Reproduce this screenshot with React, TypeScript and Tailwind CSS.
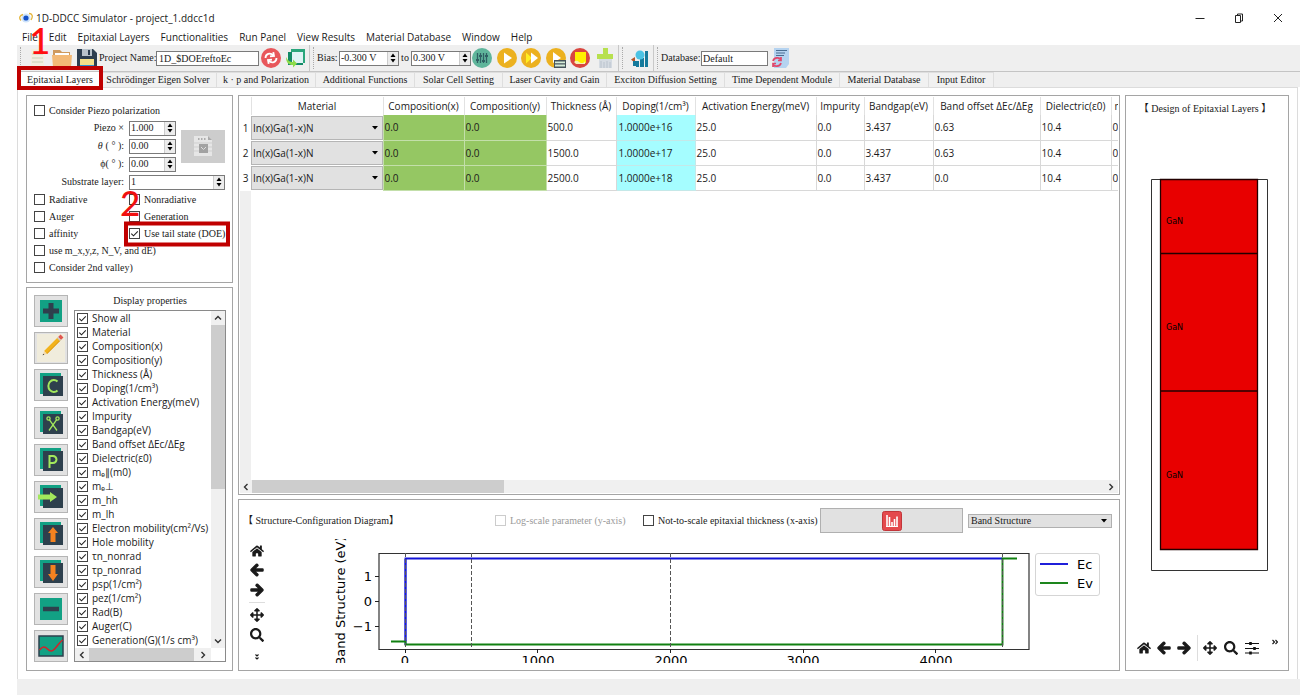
import type { ReactNode } from "react";
import { FaArrowLeft, FaArrowRight, FaArrowsAlt, FaHome, FaSearch } from "react-icons/fa";

const menus = ["File", "Edit", "Epitaxial Layers", "Functionalities", "Run Panel", "View Results", "Material Database", "Window", "Help"];

const tabs = [
  { name: "Schrödinger Eigen Solver", width: "w-[117px]" },
  { name: "k · p and Polarization", width: "w-[99px]" },
  { name: "Additional Functions", width: "w-[99px]" },
  { name: "Solar Cell Setting", width: "w-[88px]" },
  { name: "Laser Cavity and Gain", width: "w-[104px]" },
  { name: "Exciton Diffusion Setting", width: "w-[118px]" },
  { name: "Time Dependent Module", width: "w-[115px]" },
  { name: "Material Database", width: "w-[89px]" },
  { name: "Input Editor", width: "w-[65px]" },
];

const properties = [
  "Show all", "Material", "Composition(x)", "Composition(y)", "Thickness (Å)", "Doping(1/cm³)",
  "Activation Energy(meV)", "Impurity", "Bandgap(eV)", "Band offset ΔEc/ΔEg", "Dielectric(ε0)", "mₑ∥(m0)",
  "mₑ⊥", "m_hh", "m_lh", "Electron mobility(cm²/Vs)", "Hole mobility", "τn_nonrad", "τp_nonrad",
  "psp(1/cm²)", "pez(1/cm²)", "Rad(B)", "Auger(C)", "Generation(G)(1/s cm³)",
];

const columns = [
  { name: "Material", width: "w-[132px]" },
  { name: "Composition(x)", width: "w-[81px]" },
  { name: "Composition(y)", width: "w-[82px]" },
  { name: "Thickness (Å)", width: "w-[70px]" },
  { name: "Doping(1/cm³)", width: "w-[79px]" },
  { name: "Activation Energy(meV)", width: "w-[121px]" },
  { name: "Impurity", width: "w-[48px]" },
  { name: "Bandgap(eV)", width: "w-[69px]" },
  { name: "Band offset ΔEc/ΔEg", width: "w-[107px]" },
  { name: "Dielectric(ε0)", width: "w-[71px]" },
];

const layers = [
  ["0.0", "0.0", "500.0", "1.0000e+16", "25.0", "0.0", "3.437", "0.63", "10.4"],
  ["0.0", "0.0", "1500.0", "1.0000e+17", "25.0", "0.0", "3.437", "0.63", "10.4"],
  ["0.0", "0.0", "2500.0", "1.0000e+18", "25.0", "0.0", "3.437", "0.0", "10.4"],
];

function Check({ label, checked = false, disabled = false, children }: { label: string; checked?: boolean; disabled?: boolean; children?: ReactNode }) {
  return (
    <label className={disabled ? "relative flex items-center gap-1 whitespace-nowrap text-[#9a9a9a]" : "relative flex items-center gap-1 whitespace-nowrap"}>
      <span className="grid shrink-0">
        <input
          type="checkbox"
          defaultChecked={checked}
          disabled={disabled}
          className="peer col-start-1 row-start-1 size-[11px] appearance-none border border-[#444] bg-white disabled:border-[#ccc]"
        />
        <svg viewBox="0 0 11 11" className="pointer-events-none col-start-1 row-start-1 hidden size-[11px] peer-checked:block" fill="none" stroke="#222" strokeWidth="1.1">
          <path d="M2.3 5.6 4.5 7.8 8.8 3.3" />
        </svg>
      </span>
      <span>{label}</span>
      {children}
    </label>
  );
}

function Spin({ id, value, className }: { id: string; value: string; className: string }) {
  return (
    <span className={`flex h-[15px] border border-[#7a7a7a] bg-white ${className}`}>
      <input id={id} defaultValue={value} className="w-0 min-w-0 flex-1 bg-transparent pl-px outline-none" />
      <span className="flex w-[11px] flex-col border-l border-[#ccc] bg-[#ececec]">
        <button aria-label="Increase" className="flex flex-1 items-center justify-center">
          <svg viewBox="0 0 6 4" className="h-1 w-1.5"><path d="M3 .5 5.500 4h-5z" /></svg>
        </button>
        <button aria-label="Decrease" className="flex flex-1 items-center justify-center">
          <svg viewBox="0 0 6 4" className="h-1 w-1.5"><path d="M.5 0h5L3 3.500z" /></svg>
        </button>
      </span>
    </span>
  );
}

function Caret() {
  return (
    <svg viewBox="0 0 6 4" className="pointer-events-none absolute top-1/2 right-1 h-1 w-1.5 -translate-y-1/2">
      <path d="M0 0h6L3 3.500z" />
    </svg>
  );
}

function Chevron({ d }: { d: string }) {
  return (
    <svg viewBox="0 0 8 8" className="size-2" fill="none" stroke="#333" strokeWidth="1.4">
      <path d={d} />
    </svg>
  );
}
const LEFT = "M5.5 1 2.5 4l3 3";
const RIGHT = "M2.5 1l3 3-3 3";
const UP = "M1 5.5l3-3 3 3";
const DOWN = "M1 2.5l3 3 3-3";

function Bracket({ children }: { children: string }) {
  return <span className="font-['Noto_Sans_CJK_TC',sans-serif]">{children}</span>;
}

function Handle() {
  return <span className="h-[22px] w-px shrink-0 border-l border-dotted border-[#aaa]" />;
}

function Divider() {
  return <span className="h-full w-px shrink-0 bg-[#c8c8c8]" />;
}

function Tool({ label, children, className = "" }: { label: string; children: ReactNode; className?: string }) {
  return (
    <button aria-label={label} className={`shrink-0 ${className}`}>
      <svg viewBox="0 0 20 20" className="size-5">{children}</svg>
    </button>
  );
}

function SideButton({ label, children }: { label: string; children: ReactNode }) {
  return (
    <button aria-label={label} className="flex h-8 w-[34px] items-center justify-center border border-[#b5b5b5] bg-[#e2e2e2]">
      <svg viewBox="0 0 28 28" className="size-7">{children}</svg>
    </button>
  );
}

function Stack() {
  return (
    <>
      <path d="M3 2h21v21H3z" fill="#12a184" />
      <path d="M6 5h20v20H6z" fill="#2e404d" />
    </>
  );
}

function SideButtons() {
  return (
    <div className="flex flex-col justify-between">
      <SideButton label="Add layer">
        <path d="M3 3h22v22H3z" fill="#12a184" />
        <path d="M14 6v16M6 14h16" stroke="#2e404d" strokeWidth="5" />
      </SideButton>
      <SideButton label="Edit layer">
        <path d="M0 0h28v28H0z" fill="#f0ecdc" />
        <path d="M8.500 18.500 22 5" stroke="#f2b31c" strokeWidth="4" />
        <path d="M9.800 19.800 23 6.500" stroke="#d99412" strokeWidth="1" />
        <path d="M7.100 17.100 9.900 19.900 6 21z" fill="#f3d9a8" />
        <path d="m6.300 19.800 1 1-1.700.5z" fill="#333" />
        <path d="M22.500 4.500 25 2" stroke="#e0574f" strokeWidth="4" />
        <path d="M21.500 5.500 22.500 4.500" stroke="#c8ccd0" strokeWidth="4" />
      </SideButton>
      <SideButton label="Copy layer">
        <Stack />
        <path d="M20.500 10.500a5.500 6 0 1 0 0 9" fill="none" stroke="#a2e85c" strokeWidth="2" />
      </SideButton>
      <SideButton label="Cut layer">
        <Stack />
        <g fill="none" stroke="#a2e85c" strokeWidth="1.300">
          <path d="M12.300 10.700 20 21.500M19.700 10.700 12 21.500" />
          <circle cx="11.500" cy="9.500" r="1.600" />
          <circle cx="20.500" cy="9.500" r="1.600" />
        </g>
      </SideButton>
      <SideButton label="Paste layer">
        <Stack />
        <path d="M12.500 22V10h3.500a3.400 3.400 0 0 1 0 7h-3.500" fill="none" stroke="#a2e85c" strokeWidth="2" />
      </SideButton>
      <SideButton label="Insert layer">
        <Stack />
        <path d="M1 11.500h12V9l7 5-7 5v-2.500H1z" fill="#a2e85c" />
      </SideButton>
      <SideButton label="Move up">
        <Stack />
        <path d="M13.500 22V13h-2.500l5-6 5 6h-2.500v9z" fill="#f58220" />
      </SideButton>
      <SideButton label="Move down">
        <Stack />
        <path d="M13.500 7v9h-2.500l5 7 5-7h-2.500V7z" fill="#f58220" />
      </SideButton>
      <SideButton label="Remove layer">
        <path d="M3 3h22v22H3z" fill="#12a184" />
        <path d="M6 14h16" stroke="#2e404d" strokeWidth="4.500" />
      </SideButton>
      <SideButton label="Plot layer">
        <path d="M2 4h24v20H2z" fill="#12a184" stroke="#2e404d" strokeWidth="1.500" />
        <path d="M2.500 18c3-3.500 5-4 8-1s5 2.500 8-1 4.500-6 7-8" fill="none" stroke="#d2232a" strokeWidth="1.600" />
      </SideButton>
    </div>
  );
}

function Toolbar() {
  return (
    <div className="flex h-[27px] items-center border-b border-[#c4c4c4] bg-[#efefef] pl-[3px] font-['Liberation_Serif',serif] text-[10px] leading-3">
      <Handle />
      <Tool label="New" className="ml-[6px]">
        <path d="M4 1h13v18H4z" fill="#f3efdf" />
        <path d="M5 6h11M5 10h11M5 14h11" stroke="#c9d3b8" />
      </Tool>
      <Tool label="Open" className="ml-[5px]">
        <path d="M1 2h7l2 2h8v5H1z" fill="#cf9a5e" />
        <path d="M3 5h14v5H3z" fill="#fff" />
        <path d="M0 7h20l-1 12H1z" fill="#f3b976" />
      </Tool>
      <Tool label="Save" className="ml-[5px]">
        <path d="M0 1h16l4 4v14H0z" fill="#2d3e50" />
        <path d="M5 1h10v7H5z" fill="#b9c3cc" />
        <path d="M11 2h2v5h-2z" fill="#2d3e50" />
        <path d="M3 11h14v8H3z" fill="#f4df8a" />
        <path d="M3 17h14v2H3z" fill="#2f8fd0" />
      </Tool>
      <label htmlFor="project" className="ml-[2px] w-[57px] whitespace-nowrap">Project Name:</label>
      <input id="project" defaultValue="1D_$DOEreftoEc" className="h-[15px] w-[103px] border border-[#7a7a7a] bg-white pl-[2px]" />
      <Tool label="Refresh project" className="ml-[2px]">
        <circle cx="10" cy="10" r="10" fill="#e8575b" />
        <g fill="none" stroke="#fff" strokeWidth="1.800">
          <path d="M4.500 10C4.500 6 9 4 12.500 7.500M15.500 10C15.500 14 11 16 7.500 12.500" />
          <path d="M9 8.300 13 8 12.300 4.200M11 11.700 7 12 7.700 15.800" />
        </g>
      </Tool>
      <Tool label="Export" className="ml-1">
        <path d="M6 1h14v14H6z" fill="#2aa67c" />
        <path d="M3 4h15v13H3z" fill="#138a67" />
        <path d="M7 4h11v11H7z" fill="#dff3f5" />
        <path d="M1 9c0 6 3 8 7 8v2.500l4-4-4-4V14c-3 0-5-1-7-5z" fill="#8fdc4a" />
      </Tool>
      <span className="ml-1 flex h-full"><Divider /></span>
      <span className="ml-[3px] flex"><Handle /></span>
      <label htmlFor="bias-from" className="ml-[3px] w-5">Bias:</label>
      <Spin id="bias-from" value="-0.300 V" className="ml-[2px] w-[60px]" />
      <label htmlFor="bias-to" className="w-3 text-center">to</label>
      <Spin id="bias-to" value="0.300 V" className="w-[60px]" />
      <Tool label="Settings" className="ml-px">
        <circle cx="10" cy="10" r="10" fill="#5fb59b" />
        <g stroke="#2f5f63" strokeWidth="1.300">
          <path d="M5.500 5v10M8.500 5v10M11.500 5v10M14.500 5v10" />
          <path d="M4 12h3M7 8h3M10 13h3M13 8h3" strokeWidth="2" />
        </g>
      </Tool>
      <Tool label="Run" className="ml-[5px]">
        <circle cx="10" cy="10" r="10" fill="#ecb11f" />
        <path d="M7 4.500 15 10l-8 5.500z" fill="#fff" />
      </Tool>
      <Tool label="Run all" className="ml-1">
        <circle cx="10" cy="10" r="10" fill="#ecb11f" />
        <path d="M5 4.500 11 10l-6 5.500z" fill="#ffee22" />
        <path d="M10 4.500 17 10l-7 5.500z" fill="#fff" />
      </Tool>
      <Tool label="Run batch" className="ml-[5px]">
        <circle cx="10" cy="10" r="10" fill="#ecb11f" />
        <path d="M7 4 15 10l-8 5z" fill="#fff" />
        <path d="M8 12h12v8H8z" fill="#45535c" />
        <path d="M9 13.500h10v1.800H9zM9 16.500h10V18.500H9z" fill="#d5ecd8" />
      </Tool>
      <Tool label="Stop" className="ml-1">
        <circle cx="10" cy="10" r="10" fill="#d9463f" />
        <path d="M5 4h11v11H5z" fill="#ffef00" />
        <path d="M4 14c2-2 4-1 5 0s5 2 6-1v3H6z" fill="#f7f3b0" />
      </Tool>
      <Tool label="Clean" className="ml-[5px]">
        <path d="M8 0h5v6h5v5H2V6h6z" fill="#b7e04e" />
        <path d="M4 11h13v9H4z" fill="#d5dbe2" />
        <path d="M6 13v7M9 14v6M12 13v7M15 14v6" stroke="#b9c2cc" />
      </Tool>
      <span className="ml-[3px] flex h-full"><Divider /></span>
      <span className="ml-[3px] flex"><Handle /></span>
      <Tool label="Analysis" className="ml-[6px]">
        <path d="M7 13h3v6H7zM11 10h4v9h-4zM16 3h3v16h-3z" fill="#157a9c" />
        <circle cx="11" cy="7" r="4.500" fill="#4cc3e4" />
        <path d="M2 11.500 6 9v6z" fill="#b5552b" />
        <path d="M4 13h3v5H4z" fill="#157a9c" />
      </Tool>
      <span className="ml-1 flex h-full"><Divider /></span>
      <span className="ml-[3px] flex"><Handle /></span>
      <label htmlFor="database" className="ml-[3px] w-10">Database:</label>
      <input id="database" defaultValue="Default" className="h-[15px] w-[67px] border border-[#7a7a7a] bg-white pl-px" />
      <Tool label="Reload database" className="ml-[3px]">
        <path d="M3 0h15v16l-3 4H3z" fill="#b5d3f0" />
        <path d="M5 2.500h11M5 5h9M5 7.500h8" stroke="#4a6f92" strokeWidth="1.200" />
        <path d="M2 13c1-4 7-4 8-1M10 9v3.500H7M10 15c-1 4-7 4-8 1M2 19v-3.500h3" fill="none" stroke="#e0476b" strokeWidth="1.700" />
      </Tool>
    </div>
  );
}

function SimulationOptions() {
  return (
    <section className="border border-[#a5a5a5] bg-white px-[7px] pt-[6px] pb-[6px]">
      <div className="flex h-[17px] items-center"><Check label="Consider Piezo polarization" /></div>
      <div className="grid grid-cols-[90px_47px_1fr] gap-x-[5px]">
        <label htmlFor="piezo" className="flex h-[18px] items-center justify-end">Piezo ×</label>
        <span className="flex h-[18px] items-center"><Spin id="piezo" value="1.000" className="w-full" /></span>
        <button aria-label="Show piezo details" className="row-span-3 flex h-[33px] items-center justify-center self-center bg-[#cdcdcd]">
          <svg viewBox="0 0 20 22" className="h-[22px] w-5">
            <path d="M1 1h14l4 4v16H1z" fill="#e6e6e6" />
            <path d="M15 1l4 4h-4z" fill="#aaa" />
            <path d="M5 4h9" stroke="#999" strokeDasharray="1.500 1.500" strokeWidth="1.500" />
            <path d="M1 8h18M1 12h18M1 16h18" stroke="#cfcfcf" />
            <path d="M6 9h9v9H6z" fill="#a2a2a2" />
            <path d="M8 12l2.500 2.500L13 12" fill="none" stroke="#ddd" />
          </svg>
        </button>
        <label htmlFor="theta" className="flex h-[18px] items-center justify-end"><i className="pr-[3px]">θ</i>( ° ):</label>
        <span className="flex h-[18px] items-center"><Spin id="theta" value="0.00" className="w-full" /></span>
        <label htmlFor="phi" className="flex h-[18px] items-center justify-end">ϕ( ° ):</label>
        <span className="flex h-[18px] items-center"><Spin id="phi" value="0.00" className="w-full" /></span>
        <label htmlFor="substrate" className="flex h-[18px] items-center justify-end">Substrate layer:</label>
        <span className="col-span-2 flex h-[18px] items-center"><Spin id="substrate" value="1" className="w-full" /></span>
      </div>
      <div className="grid auto-rows-[17px] grid-cols-[95px_1fr]">
        <Check label="Radiative" />
        <Check label="Nonradiative" />
        <Check label="Auger" />
        <Check label="Generation" />
        <Check label="affinity" />
        <Check label="Use tail state (DOE)" checked>
          <span className="absolute top-1/2 -right-[5px] -left-[5px] h-[25px] -translate-y-1/2 border-4 border-[#c00000]" />
          <span className="absolute bottom-5 -left-[9px] font-[Lato,sans-serif] text-[35px] leading-10 font-medium text-[#f01010]">2</span>
        </Check>
        <div className="col-span-2 flex"><Check label="use m_x,y,z, N_V, and dE)" /></div>
        <div className="col-span-2 flex"><Check label="Consider 2nd valley)" /></div>
      </div>
    </section>
  );
}

function DisplayProperties() {
  return (
    <section className="flex flex-1 gap-[6px] border border-[#a5a5a5] bg-white pt-[7px] pr-[6px] pb-2 pl-[7px]">
      <SideButtons />
      <div className="flex min-w-0 flex-1 flex-col">
        <h2 className="h-[15px] text-center leading-3">Display properties</h2>
        <div className="flex flex-1 flex-col border border-[#8a8a8a] bg-white font-['Open_Sans',sans-serif] leading-[14px]">
          <div className="flex flex-1">
            <ul className="min-w-0 flex-1 pl-[2px]">
              {properties.map((p) => (
                <li key={p} className="h-[14px]"><Check label={p} checked /></li>
              ))}
            </ul>
            <div className="flex w-[14px] flex-col items-center bg-[#f0f0f0]">
              <span className="flex h-[14px] items-center"><Chevron d={UP} /></span>
              <span className="h-[164px] w-full bg-[#cdcdcd]" />
              <span className="mt-auto flex h-[14px] items-center"><Chevron d={DOWN} /></span>
            </div>
          </div>
          <div className="mr-[14px] flex h-[13px] items-center bg-[#f0f0f0]">
            <span className="flex w-[14px] justify-center"><Chevron d={LEFT} /></span>
            <span className="h-full w-[105px] bg-[#cdcdcd]" />
            <span className="flex flex-1 justify-center"><Chevron d={RIGHT} /></span>
          </div>
        </div>
      </div>
    </section>
  );
}

function LayerTable() {
  return (
    <section className="flex min-h-0 flex-1 flex-col border border-[#a5a5a5] bg-white p-px font-['Open_Sans',sans-serif]">
      <div className="relative flex-1 overflow-hidden">
        <div className="flex min-h-full flex-col">
          <table className="w-[961px] table-fixed border-collapse text-left">
            <thead>
              <tr className="h-[18px]">
                <th className="w-[11px]" aria-label="Row" />
                {columns.map((c) => (
                  <th key={c.name} className={`${c.width} border-l border-[#e2e2e2] p-0 text-center font-normal whitespace-nowrap`}>{c.name}</th>
                ))}
                <th className="w-[90px] border-l border-[#e2e2e2] p-0 pl-[3px] font-normal">mₑ∥(m0)</th>
              </tr>
            </thead>
            <tbody>
              {layers.map((row, i) => (
                <tr key={i} className="h-[25px]">
                  <th className="p-0 text-center font-normal">{i + 1}</th>
                  <td className="p-0">
                    <div className="relative h-6 border border-[#b5b5b5] bg-[#e1e1e1]">
                      <select aria-label={`Material of layer ${i + 1}`} className="h-full w-full appearance-none bg-transparent pl-px outline-none">
                        <option>In(x)Ga(1-x)N</option>
                      </select>
                      <Caret />
                    </div>
                  </td>
                  {row.map((value, j) => (
                    <td
                      key={j}
                      className={
                        j < 2
                          ? "border border-t-0 border-[#c3dfaa] bg-[#95c763] p-0 pl-px"
                          : j === 3
                            ? "border border-t-0 border-[#c5e8e8] bg-[#a5fdff] p-0 pl-[2px]"
                            : "border border-t-0 border-[#d8d8d8] p-0 pl-px"
                      }
                    >
                      {value}
                    </td>
                  ))}
                  <td className="border border-t-0 border-[#d8d8d8] p-0 pl-px">0.2</td>
                </tr>
              ))}
            </tbody>
          </table>
          <span className="w-[11px] flex-1 bg-[#efefef]" />
        </div>
      </div>
      <div className="flex h-[13px] items-center bg-[#f0f0f0]">
        <span className="flex w-3 justify-center"><Chevron d={LEFT} /></span>
        <span className="h-full w-[252px] bg-[#cdcdcd]" />
        <span className="ml-auto flex w-[14px] justify-center"><Chevron d={RIGHT} /></span>
      </div>
    </section>
  );
}

function BandChart() {
  const dash = { stroke: "#555", strokeWidth: 1, strokeDasharray: "4 2" };
  return (
    <svg viewBox="0 2 780 124" className="mt-[2px] min-w-0 flex-1 self-start font-['DejaVu_Sans',sans-serif] text-[13px]" role="img" aria-label="Band structure plot">
      <g fill="none">
        <path d="M49 16.500h650v96H49z" stroke="#333" strokeWidth="1.200" />
        <path d="M75.500 112v4M207.500 112v4M340.500 112v4M473.500 112v4M605.500 112v4M45 39.500h4M45 64.500h4M45 89.500h4" stroke="#222" />
        <path d="M75.500 108V21.500h597" stroke="#1414d8" strokeWidth="1.900" />
        <path d="M61 104.500h14.500v3h597v-86H687" stroke="#118011" strokeWidth="1.900" />
        <path d="M75.500 104V22" stroke="#1414d8" strokeWidth="1.900" />
        <path d="M75.500 16v96M141.500 16v96M340.500 16v96M672.500 16v96" {...dash} />
        <rect x="705.500" y="16.500" width="64" height="42" rx="2.500" fill="#fff" stroke="#d5d5d5" />
        <path d="M710 27h28" stroke="#1414d8" strokeWidth="1.900" />
        <path d="M710 46h28" stroke="#118011" strokeWidth="1.900" />
      </g>
      <g textAnchor="end">
        <text x="42" y="44">1</text>
        <text x="42" y="69">0</text>
        <text x="42" y="94">−1</text>
      </g>
      <g textAnchor="middle">
        <text x="75" y="128">0</text>
        <text x="208" y="128">1000</text>
        <text x="341" y="128">2000</text>
        <text x="473" y="128">3000</text>
        <text x="606" y="128">4000</text>
        <text transform="translate(15 64) rotate(-90)">Band Structure (eV)</text>
      </g>
      <text x="747" y="32">Ec</text>
      <text x="747" y="51">Ev</text>
    </svg>
  );
}

function StructureDiagram() {
  return (
    <section className="flex h-[172px] flex-col border border-[#a5a5a5] bg-white">
      <div className="flex h-[37px] items-center pt-1 pr-[7px] pl-1">
        <h2 className="whitespace-nowrap"><Bracket>【</Bracket> Structure-Configuration Diagram<Bracket>】</Bracket></h2>
        <div className="ml-auto w-[148px]"><Check label="Log-scale parameter (y-axis)" disabled /></div>
        <div className="w-[177px]"><Check label="Not-to-scale epitaxial thickness (x-axis)" /></div>
        <button aria-label="Plot structure" className="flex h-[25px] w-[143px] items-center justify-center border border-[#b0b0b0] bg-[#e1e1e1]">
          <svg viewBox="0 0 20 20" className="size-5">
            <rect x=".5" y=".5" width="19" height="19" rx="2" fill="#e4494d" stroke="#c23539" />
            <path d="M5 4v11M7.500 6v9M10 11v4M12.500 8v7M15 5.500v9.500" stroke="#fff" strokeWidth="1.600" />
            <path d="M4 15.500h12" stroke="#fff" />
          </svg>
        </button>
        <div className="relative ml-[5px] h-[14px] w-[144px] border border-[#b0b0b0] bg-[#e1e1e1]">
          <select aria-label="Plotted quantity" className="block h-full w-full appearance-none bg-transparent pl-[2px] leading-3 outline-none">
            <option>Band Structure</option>
          </select>
          <Caret />
        </div>
      </div>
      <div className="flex min-h-0 flex-1 pr-[9px] pl-[10px]">
        <div className="flex w-4 flex-col items-center pt-[7px] text-[14px]">
          <button aria-label="Home"><FaHome /></button>
          <button aria-label="Back" className="mt-[5px]"><FaArrowLeft strokeWidth={45} /></button>
          <button aria-label="Forward" className="mt-[6px]"><FaArrowRight strokeWidth={45} /></button>
          <span className="mt-[5px] h-px w-full bg-[#ddd]" />
          <button aria-label="Pan" className="mt-[5px]"><FaArrowsAlt /></button>
          <button aria-label="Zoom" className="mt-[6px]"><FaSearch /></button>
          <button aria-label="More tools" className="mt-3">
            <svg viewBox="0 0 6 6" className="size-[6px]" fill="none" stroke="#111" strokeWidth="1.100"><path d="M1.500 .5 3 2 4.500 .5M1.500 3.500 3 5l1.500-1.500" /></svg>
          </button>
        </div>
        <div className="flex min-w-0 flex-1 pl-[65px]"><BandChart /></div>
      </div>
    </section>
  );
}

function LayerDesign() {
  return (
    <section className="flex flex-col border border-[#a5a5a5] bg-white">
      <h2 className="pt-[6px] pr-1 text-center whitespace-nowrap"><Bracket>【</Bracket> Design of Epitaxial Layers <Bracket>】</Bracket></h2>
      <svg viewBox="0 0 162 396" className="mt-[62px] w-full font-['DejaVu_Sans',sans-serif] text-[8px]" role="img" aria-label="Epitaxial layer stack">
        <path d="M25.500 2.500h116v391h-116z" fill="none" stroke="#333" />
        <path d="M34.500 2.500h97v370h-97zM34.500 76.500h97M34.500 214h97" fill="#e80000" stroke="#200" strokeWidth="1.300" />
        <text x="40" y="47">GaN</text>
        <text x="40" y="153">GaN</text>
        <text x="40" y="301">GaN</text>
      </svg>
      <div className="mt-auto mb-[9px] flex items-center pr-[10px] pl-[11px] text-[14px]">
        <button aria-label="Home"><FaHome /></button>
        <button aria-label="Back" className="ml-[6px]"><FaArrowLeft strokeWidth={45} /></button>
        <button aria-label="Forward" className="ml-[6px]"><FaArrowRight strokeWidth={45} /></button>
        <span className="ml-[6px] h-[26px] w-px bg-[#ddd]" />
        <button aria-label="Pan" className="ml-[5px]"><FaArrowsAlt /></button>
        <button aria-label="Zoom" className="ml-[7px]"><FaSearch /></button>
        <button aria-label="Configure subplots" className="ml-[7px]">
          <svg viewBox="0 0 14 14" className="size-[14px]" stroke="#111" fill="none">
            <path d="M0 2.500h14M0 7.500h14M0 12h14" strokeWidth="1.200" />
            <path d="M5.500 1v3M9.500 6v3M5.500 10.500v3" strokeWidth="2.600" />
          </svg>
        </button>
        <button aria-label="More tools" className="ml-auto self-start pt-1">
          <svg viewBox="0 0 6 6" className="size-[6px]" fill="none" stroke="#111" strokeWidth="1.100"><path d="M.5 1l2 2-2 2M3.500 1l2 2-2 2" /></svg>
        </button>
      </div>
    </section>
  );
}

export default function App() {
  return (
    <div className="flex min-h-screen flex-col bg-white pl-[17px] font-['Open_Sans',sans-serif] text-[10px] leading-3 text-[#1a1a1a]">
      <header className="flex h-7 items-center gap-[3px] pt-2 pl-[2px]">
        <svg viewBox="0 0 14 12" className="h-3 w-[14px]">
          <circle cx="7" cy="6" r="4.600" fill="#cfe4fa" />
          <circle cx="7" cy="6" r="2.600" fill="#1450c8" />
          <path d="M2 8.500C-.5 6 1 3 4 2.500M10 1.500c3 0 4.500 2.500 2 6.500" fill="none" stroke="#e5b53a" strokeWidth="1.300" />
        </svg>
        <h1>1D-DDCC Simulator - project_1.ddcc1d</h1>
        <div className="ml-auto flex items-center gap-[29px] pr-[17px]">
          <button aria-label="Minimize"><svg viewBox="0 0 10 10" className="size-[10px]"><path d="M.5 5.500h9" stroke="#222" /></svg></button>
          <button aria-label="Restore"><svg viewBox="0 0 10 10" className="size-[10px]" fill="none" stroke="#222"><path d="M1.500 2.500h5v7h-5zM3.500 2.500v-1.500h5v7h-1.500" /></svg></button>
          <button aria-label="Close"><svg viewBox="0 0 10 10" className="size-[10px]"><path d="m1 1 8 8M9 1 1 9" stroke="#222" /></svg></button>
        </div>
      </header>
      <nav className="flex h-[17px] items-center gap-[11px] pl-[5px]">
        {menus.map((m) => (
          <button key={m} className="whitespace-nowrap">{m}</button>
        ))}
      </nav>
      <Toolbar />
      <div role="tablist" className="flex h-[15px] bg-[#efefef] pl-[3px] font-['Liberation_Serif',serif]">
        <button role="tab" aria-selected="true" className="relative w-20 bg-white whitespace-nowrap">
          Epitaxial Layers
          <span className="absolute -inset-x-[3px] -top-[6px] -bottom-[3px] border-4 border-[#c00000]" />
          <span className="absolute bottom-[27px] left-[9px] font-[Lato,sans-serif] text-[37px] leading-10 font-medium text-[#ff1010]">1</span>
        </button>
        {tabs.map((t) => (
          <button key={t.name} role="tab" aria-selected="false" className={`${t.width} border-t border-r border-[#dedede] bg-[#f1f1f1] whitespace-nowrap`}>{t.name}</button>
        ))}
      </div>
      <main className="mr-[2px] grid flex-1 grid-cols-[207px_minmax(0,1fr)_164px] gap-[5px] border border-b-0 border-[#dcdcdc] p-2 pt-[7px] font-['Liberation_Serif',serif]">
        <div className="flex flex-col gap-1">
          <SimulationOptions />
          <DisplayProperties />
        </div>
        <div className="flex min-w-0 flex-col gap-1">
          <LayerTable />
          <StructureDiagram />
        </div>
        <LayerDesign />
      </main>
      <footer className="h-4 bg-[#efefef]" />
    </div>
  );
}
